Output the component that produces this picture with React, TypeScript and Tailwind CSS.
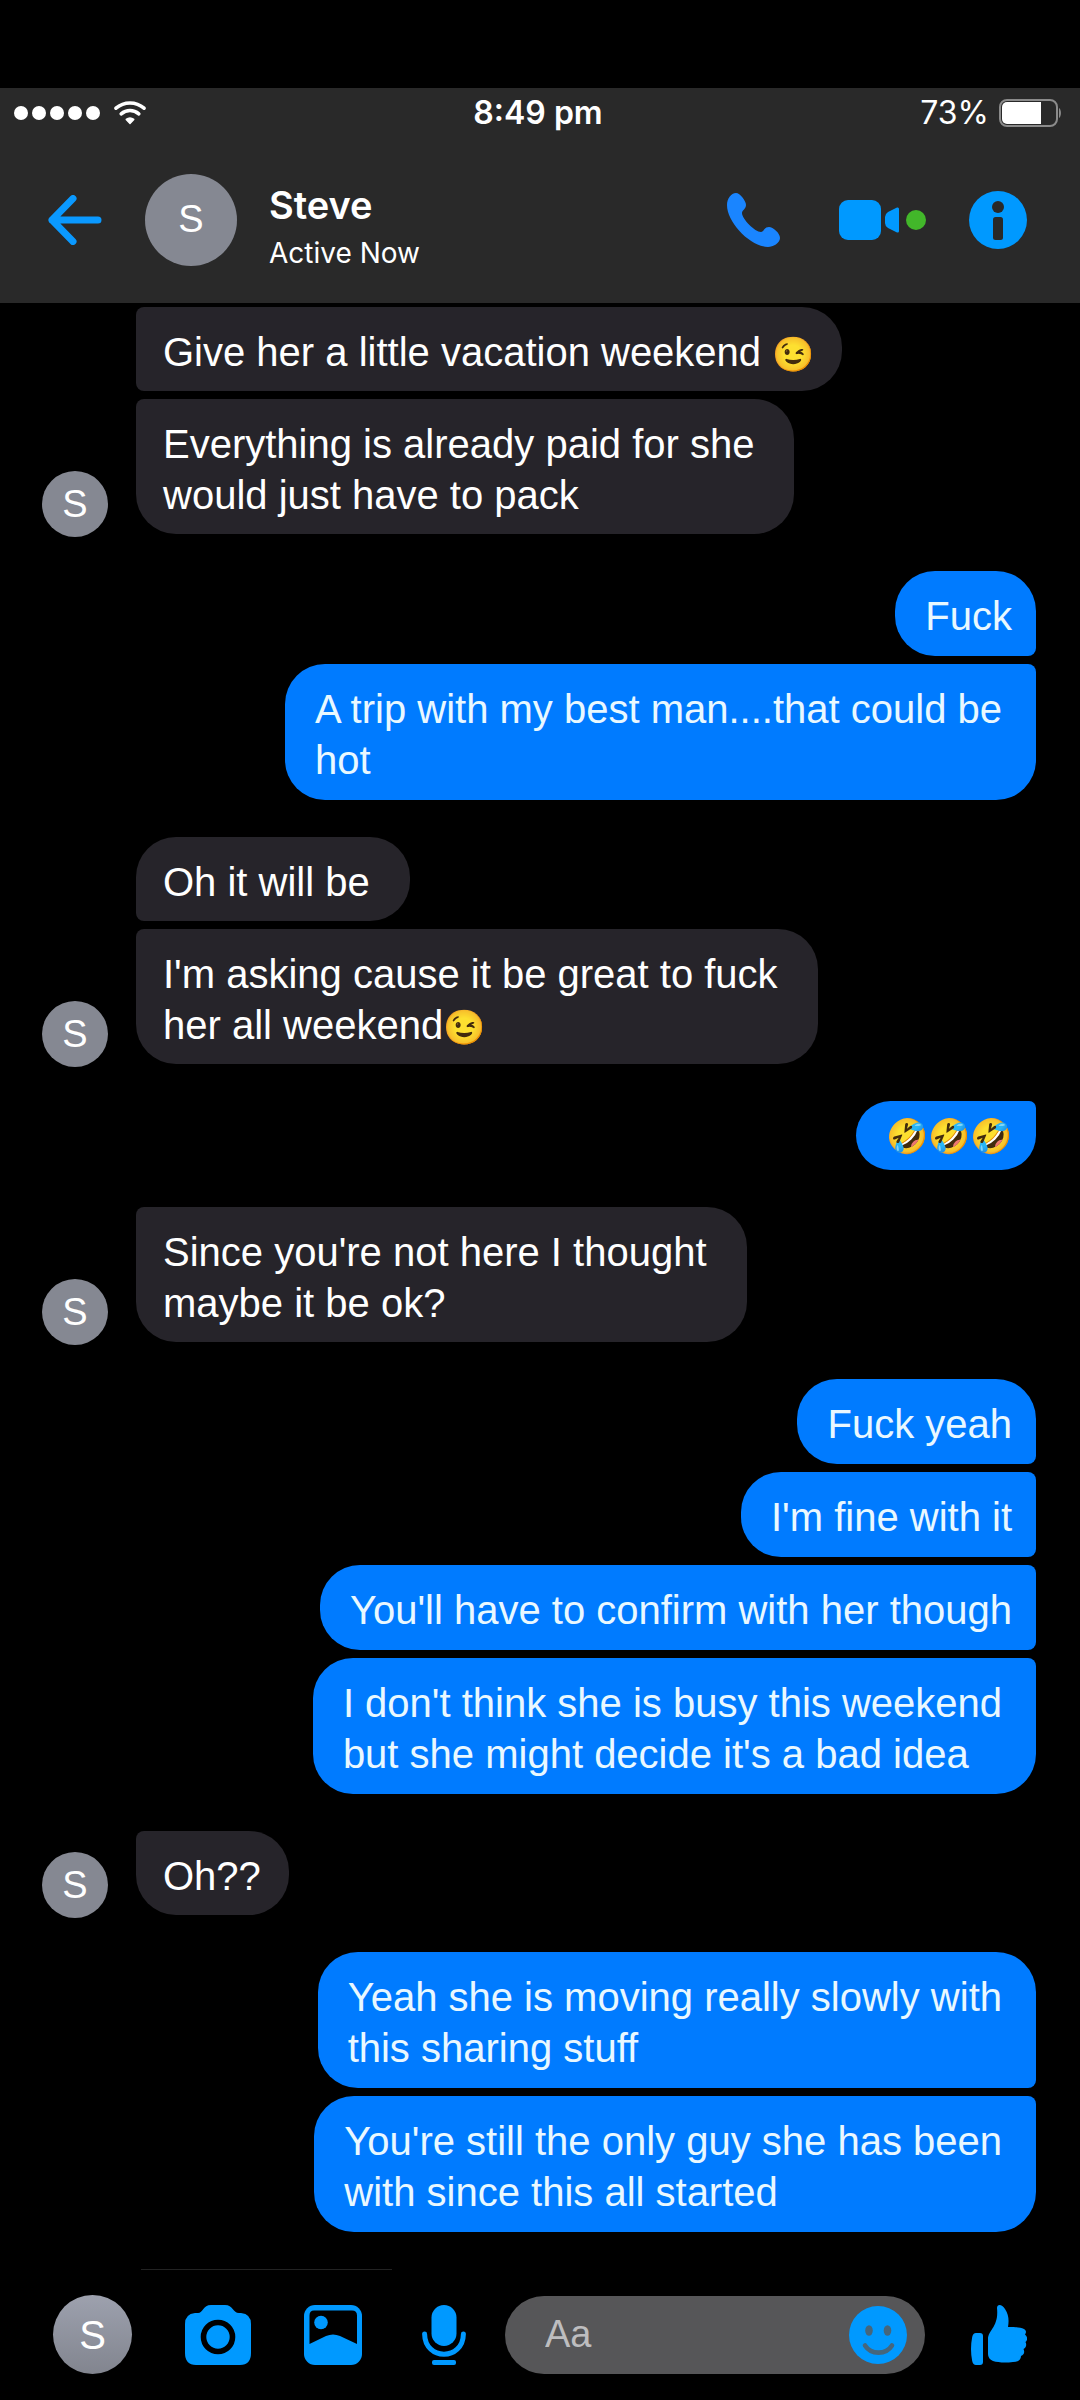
import { Fragment } from 'react';

interface Message {
  lines: string[];
  /** corner + padding classes for this bubble */
  shape: string;
}

interface Group {
  from: 'them' | 'me';
  messages: Message[];
}

const THEM_FIRST = 'rounded-[40px] rounded-bl-lg';
const THEM_MIDDLE = 'rounded-[40px] rounded-l-lg';
const THEM_LAST = 'rounded-[40px] rounded-tl-lg';
const ME_FIRST = 'rounded-[40px] rounded-br-lg';
const ME_MIDDLE = 'rounded-[40px] rounded-r-lg';
const ME_LAST = 'rounded-[40px] rounded-tr-lg';

const GROUPS: Group[] = [
  {
    from: 'them',
    messages: [
      { lines: ['Give her a little vacation weekend 😉'], shape: `${THEM_MIDDLE} pr-7` },
      { lines: ['Everything is already paid for she', 'would just have to pack'], shape: `${THEM_LAST} pr-10` },
    ],
  },
  {
    from: 'me',
    messages: [
      { lines: ['Fuck'], shape: `${ME_FIRST} pr-6` },
      { lines: ['A trip with my best man....that could be', 'hot'], shape: `${ME_LAST} pr-[34px]` },
    ],
  },
  {
    from: 'them',
    messages: [
      { lines: ['Oh it will be'], shape: `${THEM_FIRST} pr-10` },
      { lines: ["I'm asking cause it be great to fuck", 'her all weekend😉'], shape: `${THEM_LAST} pr-10` },
    ],
  },
  {
    from: 'me',
    messages: [{ lines: ['🤣🤣🤣'], shape: `${ME_LAST} pr-6` }],
  },
  {
    from: 'them',
    messages: [{ lines: ["Since you're not here I thought", 'maybe it be ok?'], shape: `${THEM_LAST} pr-10` }],
  },
  {
    from: 'me',
    messages: [
      { lines: ['Fuck yeah'], shape: `${ME_FIRST} pr-6` },
      { lines: ["I'm fine with it"], shape: `${ME_MIDDLE} pr-6` },
      { lines: ["You'll have to confirm with her though"], shape: `${ME_MIDDLE} pr-6` },
      { lines: ["I don't think she is busy this weekend", "but she might decide it's a bad idea"], shape: `${ME_LAST} pr-[34px]` },
    ],
  },
  {
    from: 'them',
    messages: [{ lines: ['Oh??'], shape: `${THEM_LAST} pr-7` }],
  },
  {
    from: 'me',
    messages: [
      { lines: ['Yeah she is moving really slowly with', 'this sharing stuff'], shape: `${ME_FIRST} pr-[34px]` },
      { lines: ["You're still the only guy she has been", 'with since this all started'], shape: `${ME_LAST} pr-[34px]` },
    ],
  },
];

/** Emoji run a little smaller than the letters around them */
function Line({ text }: { text: string }) {
  const parts = text.split(/(\p{Extended_Pictographic}+)/u).filter(Boolean);
  return (
    <>
      {parts.map((part, i) =>
        /^\p{Extended_Pictographic}+$/u.test(part) ? (
          <span key={i} className="text-[34px] leading-none">{part}</span>
        ) : (
          <Fragment key={i}>{part}</Fragment>
        )
      )}
    </>
  );
}

function Bubble({ message, from }: { message: Message; from: Group['from'] }) {
  const emojiOnly = /^\p{Extended_Pictographic}+$/u.test(message.lines[0]);
  const side = from === 'me' ? 'bg-[#007bff] text-[#e9f8ff] pl-[30px]' : 'bg-[#26242a] text-white pl-[27px]';
  return (
    <p
      className={`w-fit text-[40px] leading-[51px] whitespace-pre ${side} ${message.shape} ${
        emojiOnly ? 'pt-2 pb-2.5' : from === 'me' ? 'pt-5 pb-3.5' : 'pt-5 pb-[13px]'
      }`}
    >
      {message.lines.map((line, i) => (
        <Fragment key={i}>
          {i > 0 && '\n'}
          <Line text={line} />
        </Fragment>
      ))}
    </p>
  );
}

function MessageGroup({ group }: { group: Group }) {
  if (group.from === 'me') {
    return (
      <div className="flex flex-col items-end gap-2 pb-[3px]">
        {group.messages.map((m) => (
          <Bubble key={m.lines[0]} message={m} from="me" />
        ))}
      </div>
    );
  }
  return (
    <div className="flex items-end gap-7">
      <div className="w-[66px] h-[66px] shrink-0 rounded-full bg-[#858892] text-white text-[38px] flex items-center justify-center">S</div>
      <div className="flex flex-col gap-2 pb-[3px]">
        {group.messages.map((m) => (
          <Bubble key={m.lines[0]} message={m} from="them" />
        ))}
      </div>
    </div>
  );
}

function StatusBar() {
  return (
    <div className="h-[50px] pl-3.5 pr-[18px] flex items-center text-white font-[Inter,sans-serif]">
      <div className="flex-1 flex items-center gap-3.5">
        <div className="flex gap-1">
          {[0, 1, 2, 3, 4].map((i) => (
            <span key={i} className="w-3.5 h-3.5 rounded-full bg-white" />
          ))}
        </div>
        <svg viewBox="0 0 32 24" className="w-8 h-6" fill="none" stroke="white" strokeWidth="3.6" strokeLinecap="round">
          <path d="M2 7.2C10 0.2 22 0.2 30 7.2" />
          <path d="M7.2 12.8C12.4 8.4 19.6 8.4 24.8 12.8" />
          <path d="M12.2 18.4C14.5 16.6 17.5 16.6 19.8 18.4L16 22.4Z" fill="white" strokeWidth="1.4" strokeLinejoin="round" />
        </svg>
      </div>
      <div className="text-[32px] leading-10 font-semibold">8:49 pm</div>
      <div className="flex-1 flex items-center justify-end gap-2.5">
        <span className="text-[32px] leading-10">73%</span>
        <svg viewBox="0 0 63 28" className="w-[63px] h-7">
          <rect x="1" y="1" width="57" height="26" rx="7" fill="none" stroke="#8b8b8b" strokeWidth="2" />
          <path d="M8 3H42V25H8A5 5 0 0 1 3 20V8A5 5 0 0 1 8 3Z" fill="white" />
          <path d="M60 9C62.6 10.5 62.6 17.5 60 19Z" fill="#8b8b8b" />
        </svg>
      </div>
    </div>
  );
}

function ChatHeader() {
  return (
    <div className="h-[165px] pl-12 pr-[53px] pb-[2px] flex items-center">
      <button type="button" aria-label="Back" className="mr-[43px]">
        <svg viewBox="0 0 54 50" className="w-[54px] h-[50px] block" fill="none" stroke="#0a99ff" strokeWidth="7" strokeLinecap="round" strokeLinejoin="round">
          <path d="M50 25H4M25 3.5L4 25L25 46.5" />
        </svg>
      </button>
      <div className="w-[92px] h-[92px] rounded-full bg-[#858892] text-white text-[38px] flex items-center justify-center">S</div>
      <div className="flex-1 pl-8 pt-5 text-white font-[Inter,sans-serif]">
        <h1 className="text-[38px] leading-[46px] font-semibold">Steve</h1>
        <p className="text-[28px] leading-[50px]">Active Now</p>
      </div>
      <button type="button" aria-label="Call" className="mr-[59px]">
        <svg viewBox="0 0 53 54" className="w-[53px] h-[54px] block" fill="#1a85ff">
          <path d="M9 0C13 0 19 8 19 12C19 16 15 17 15 20C15 26 28 39 34 39C37 39 37 34 42 34C46 34 53 40 53 45C53 50 46 54 41 54C24 54 0 30 0 12C0 6 4 0 9 0Z" />
        </svg>
      </button>
      <button type="button" aria-label="Video call" className="mr-[43px] flex items-center gap-[7px]">
        <svg viewBox="0 0 60 42" className="w-[60px] h-[42px]" fill="#0099ff">
          <rect x="0" y="1" width="42" height="40" rx="9" />
          <path d="M49 13L58 8.6Q60 8 60 10V32Q60 34 58 33.4L49 29Q46 27 46 24V18Q46 15 49 13Z" />
        </svg>
        <span className="w-5 h-5 rounded-full bg-[#42b72a]" />
      </button>
      <button type="button" aria-label="Conversation info">
        <svg viewBox="0 0 58 58" className="w-[58px] h-[58px] block">
          <circle cx="29" cy="29" r="29" fill="#0099ff" />
          <circle cx="29" cy="16" r="6" fill="#292929" />
          <rect x="24" y="26" width="10" height="23" rx="2.5" fill="#292929" />
        </svg>
      </button>
    </div>
  );
}

function Composer() {
  return (
    <form className="px-[53px] pt-[25px] pb-[26px] flex items-center" onSubmit={(e) => e.preventDefault()}>
      <button type="button" aria-label="Profile" className="w-[79px] h-[79px] mr-[53px] rounded-full bg-linear-to-b from-[#9da1ae] to-[#82858f] text-white text-[40px] flex items-center justify-center">
        S
      </button>
      <button type="button" aria-label="Camera" className="mr-[53px]">
        <svg viewBox="0 0 66 60" className="w-[66px] h-[60px] block">
          <path d="M10 8H13C18 8 18 0 26 0H40C48 0 48 8 54 8H56Q66 9 66 19V48Q66 60 55 60H11Q0 60 0 48V19Q0 9 10 8Z" fill="#0099ff" />
          <circle cx="33" cy="32" r="14.5" fill="#0099ff" stroke="black" strokeWidth="5.6" />
        </svg>
      </button>
      <button type="button" aria-label="Gallery" className="mr-[60px]">
        <svg viewBox="0 0 58 60" className="w-[58px] h-[60px] block">
          <rect width="58" height="60" rx="11" fill="#0099ff" />
          <path d="M10 5.5H48Q53 5.5 53 10.5V39L36 31Q29 28 22 31L5.5 39V10.5Q5.5 5.5 10 5.5Z" fill="black" />
          <circle cx="17" cy="17.5" r="6.8" fill="#0099ff" />
        </svg>
      </button>
      <button type="button" aria-label="Voice message" className="mr-[39px]">
        <svg viewBox="0 0 44 60" className="w-11 h-[60px] block" fill="#0099ff">
          <rect x="9.5" y="0" width="25" height="41" rx="12.5" />
          <path d="M2.6 29C3 56 41 56 41.4 29" fill="none" stroke="#0099ff" strokeWidth="5" strokeLinecap="round" />
          <rect x="10" y="55" width="24" height="5" rx="2" />
        </svg>
      </button>
      <div className="flex-1 min-w-0 h-[78px] mr-[46px] pl-10 pr-[18px] rounded-full bg-[#565658] flex items-center">
        <input
          type="text"
          aria-label="Message"
          placeholder="Aa"
          className="flex-1 min-w-0 bg-transparent outline-none text-[38px] text-white placeholder:text-[#bdbdbf]"
        />
        <button type="button" aria-label="Emoji">
          <svg viewBox="0 0 58 58" className="w-[58px] h-[58px] block">
            <circle cx="29" cy="29" r="29" fill="#0099ff" />
            <ellipse cx="20" cy="24.5" rx="3.8" ry="5.2" fill="#46667c" />
            <ellipse cx="38.5" cy="24.5" rx="3.8" ry="5.2" fill="#46667c" />
            <path d="M16 39.5C22 49 37 49 43 39.5" fill="none" stroke="#46667c" strokeWidth="4.6" strokeLinecap="round" />
          </svg>
        </button>
      </div>
      <button type="button" aria-label="Like">
        <svg viewBox="0 0 56 60" className="w-14 h-[60px] block" fill="#0099ff">
          <path d="M5 28H9Q12 28 12 31V57Q12 60 9 60H5Q2 60 1.2 56Q-1.2 44 1.2 32Q2 28 5 28Z" />
          <path d="M26 3C26 -1 31 -1 34 4C38 10 38 16 37 22C44 22 49 22 53 24C56 26 55 28 54 29.5C57 32 56.5 35.5 54.5 37C56 40 55 43 52.5 44C54 47 53 50 50 51C50 55 47 57 42 57C34 58 27 57.5 22 56Q17 54 17 49V34C17 25 28 22 26 3Z" />
        </svg>
      </button>
    </form>
  );
}

export default function App() {
  return (
    <div className="min-h-screen bg-black pt-[88px] flex flex-col font-['Liberation_Sans',Arial,sans-serif]">
      <header className="bg-[#292929]">
        <StatusBar />
        <ChatHeader />
      </header>
      <main className="flex-1 pt-1 pl-[42px] pr-11 flex flex-col gap-[34px]">
        {GROUPS.map((group, i) => (
          <MessageGroup key={i} group={group} />
        ))}
      </main>
      <footer>
        <div className="ml-[141px] w-[251px] h-px bg-[#222222]" />
        <Composer />
      </footer>
    </div>
  );
}
